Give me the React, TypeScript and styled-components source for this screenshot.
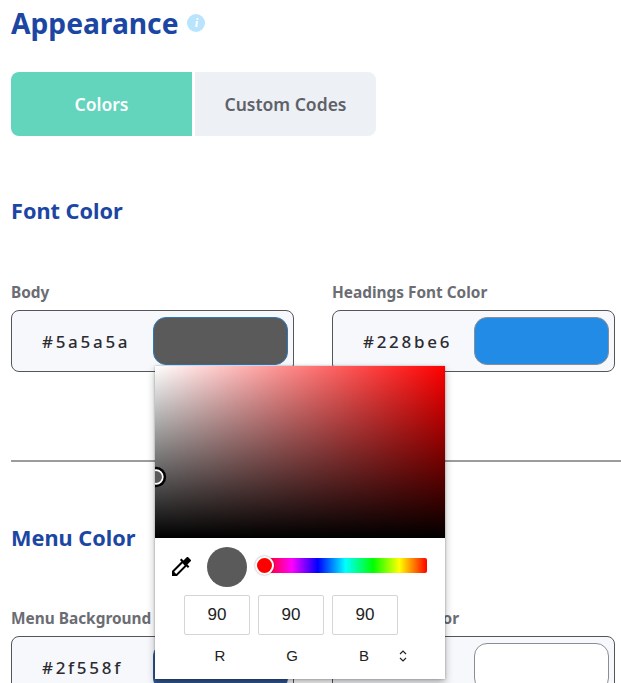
import styled, { createGlobalStyle } from 'styled-components'

const GlobalStyle = createGlobalStyle`
  html, body {
    margin: 0;
    padding: 0;
    height: 683px;
    overflow: hidden;
    background: #fff;
    font-family: "Noto Sans", "Open Sans", sans-serif;
  }
  * {
    box-sizing: border-box;
  }
`

const Page = styled.div`
  position: relative;
  width: 621px;
  height: 683px;
  overflow: hidden;
  padding-left: 11px;
`

const TitleRow = styled.div`
  display: flex;
  align-items: center;
  gap: 9px;
  height: 48px;
`

const Title = styled.h1`
  margin: -2px 0 0;
  font-size: 28.2px;
  font-weight: 700;
  color: #1c46a3;
  line-height: 46px;
`

const InfoIcon = styled.span`
  width: 18px;
  height: 18px;
  margin-top: -3px;
  border-radius: 50%;
  background: #b9e4fd;
  color: #fff;
  display: flex;
  align-items: center;
  justify-content: center;
  font-size: 13px;
  font-style: italic;
  font-weight: 700;
  font-family: "Liberation Serif", serif;
`

const Tabs = styled.div`
  display: flex;
  gap: 3px;
  margin-top: 24px;
`

const Tab = styled.div<{ $active?: boolean; $side: 'left' | 'right' }>`
  width: 181px;
  height: 64px;
  display: flex;
  align-items: center;
  justify-content: center;
  font-size: 17.5px;
  font-weight: 600;
  background: ${(p) => (p.$active ? '#63d5bc' : '#edf0f5')};
  color: ${(p) => (p.$active ? '#fff' : '#5f6168')};
  border-radius: ${(p) => (p.$side === 'left' ? '8px 0 0 8px' : '0 8px 8px 0')};
`

const SectionTitle = styled.h2<{ $top: number }>`
  margin: ${(p) => p.$top}px 0 0;
  font-size: 21.7px;
  font-weight: 700;
  line-height: 30px;
  color: #1c46a3;
`

const FieldGrid = styled.div<{ $top: number }>`
  display: grid;
  grid-template-columns: 283px 283px;
  column-gap: 38px;
  margin-top: ${(p) => p.$top}px;
`

const Field = styled.div`
  display: flex;
  flex-direction: column;
`

const FieldLabel = styled.label`
  font-size: 15.4px;
  font-weight: 700;
  line-height: 20px;
  color: #6b6d73;
  margin-bottom: 7px;
  white-space: nowrap;
`

const ColorBox = styled.div`
  width: 283px;
  height: 62px;
  flex-shrink: 0;
  display: flex;
  align-items: center;
  padding: 0 4px 0 30px;
  background: #f7f8fc;
  border: 1px solid #55565a;
  border-radius: 8px;
`

const HexValue = styled.div`
  width: 86px;
  margin-right: 25px;
  overflow: hidden;
  white-space: nowrap;
  font-size: 17px;
  font-weight: 500;
  letter-spacing: 2.7px;
  color: #2b2c30;
`

const Swatch = styled.div<{ $color: string; $border: string }>`
  width: 135px;
  height: 48px;
  border-radius: 13px;
  background: ${(p) => p.$color};
  border: 1px solid ${(p) => p.$border};
`

const Divider = styled.hr`
  margin: 88px 0 0;
  border: 0;
  border-top: 2px solid #9c9c9c;
`

const Picker = styled.div`
  position: absolute;
  left: 155px;
  top: 366px;
  width: 290px;
  height: 313px;
  background: #fff;
  box-shadow: 0 0 2px rgba(0, 0, 0, 0.3), 0 4px 8px rgba(0, 0, 0, 0.3);
`

const Saturation = styled.div`
  position: relative;
  height: 172px;
  overflow: hidden;
  background:
    linear-gradient(to top, #000, rgba(0, 0, 0, 0)),
    linear-gradient(to right, #fff, rgba(255, 255, 255, 0)),
    #f00;
`

const SaturationHandle = styled.div`
  position: absolute;
  left: -8px;
  top: 102px;
  width: 18px;
  height: 18px;
  border-radius: 50%;
  background: #5a5a5a;
  border: 2px solid #fff;
  box-shadow: 0 0 0 3px #000;
  transform: scale(0.85);
`

const Controls = styled.div`
  display: flex;
  align-items: center;
  height: 57px;
  padding-left: 17px;
`

const DropperIcon = styled.svg`
  width: 19px;
  height: 19px;
  margin-right: 16px;
  flex-shrink: 0;
`

const Preview = styled.div`
  width: 40px;
  height: 40px;
  border-radius: 50%;
  background: #5a5a5a;
  margin-right: 17px;
  flex-shrink: 0;
`

const HueTrack = styled.div`
  position: relative;
  width: 163px;
  height: 15px;
  margin-top: -2px;
  border-radius: 2px;
  background: linear-gradient(
    to right,
    #f00 0%,
    #f0f 17%,
    #00f 33%,
    #0ff 50%,
    #0f0 67%,
    #ff0 83%,
    #f00 100%
  );
`

const HueHandle = styled.div`
  position: absolute;
  left: -9px;
  top: -2px;
  width: 19px;
  height: 19px;
  border-radius: 50%;
  background: #f00;
  border: 2px solid #fff;
  box-shadow: 0 0 2px rgba(0, 0, 0, 0.4);
`

const InputsRow = styled.div`
  display: flex;
  gap: 8px;
  padding-left: 29px;
`

const ChannelInput = styled.div`
  width: 66px;
  height: 40px;
  display: flex;
  align-items: center;
  justify-content: center;
  border: 1px solid #d5d5d5;
  border-radius: 2px;
  font-family: "Liberation Sans", Arial, sans-serif;
  font-size: 17px;
  color: #222;
`

const LabelsRow = styled.div`
  display: flex;
  align-items: center;
  margin-top: 11px;
  padding-left: 29px;
`

const ChannelLabel = styled.div`
  width: 72px;
  text-align: center;
  font-family: "Liberation Sans", Arial, sans-serif;
  font-size: 15px;
  line-height: 20px;
  color: #222;
`

const ToggleIcon = styled.svg`
  width: 10px;
  height: 14px;
  margin-left: -2px;
`

const fontFields = [
  { label: 'Body', hex: '#5a5a5a', color: '#5a5a5a', border: '#2f78b8' },
  { label: 'Headings Font Color', hex: '#228be6', color: '#228be6', border: '#8a8d94' },
]

const menuFields = [
  { label: 'Menu Background', hex: '#2f558f', color: '#2f558f', border: '#2f558f' },
  { label: 'Menu Font Color', hex: '#ffffff', color: '#ffffff', border: '#8a8d94' },
]

function ColorField({ label, hex, color, border }: (typeof fontFields)[number]) {
  return (
    <Field>
      <FieldLabel>{label}</FieldLabel>
      <ColorBox>
        <HexValue>{hex}</HexValue>
        <Swatch $color={color} $border={border} />
      </ColorBox>
    </Field>
  )
}

export default function App() {
  return (
    <Page>
      <GlobalStyle />
      <TitleRow>
        <Title>Appearance</Title>
        <InfoIcon>i</InfoIcon>
      </TitleRow>

      <Tabs>
        <Tab $active $side="left">Colors</Tab>
        <Tab $side="right">Custom Codes</Tab>
      </Tabs>

      <SectionTitle $top={60}>Font Color</SectionTitle>
      <FieldGrid $top={57}>
        {fontFields.map((f) => (
          <ColorField key={f.label} {...f} />
        ))}
      </FieldGrid>

      <Divider />

      <SectionTitle $top={61}>Menu Color</SectionTitle>
      <FieldGrid $top={56}>
        {menuFields.map((f) => (
          <ColorField key={f.label} {...f} />
        ))}
      </FieldGrid>

      <Picker>
        <Saturation>
          <SaturationHandle />
        </Saturation>
        <Controls>
          <DropperIcon viewBox="3 3 18 18" fill="#000">
            <path d="M20.71 5.63l-2.34-2.34a1 1 0 0 0-1.41 0l-3.12 3.12-1.93-1.91-1.41 1.41 1.42 1.42L3 16.25V21h4.75l8.92-8.92 1.42 1.42 1.41-1.41-1.92-1.92 3.12-3.12a1 1 0 0 0 .01-1.42zM6.92 19L5 17.08l8.06-8.06 1.92 1.92L6.92 19z" />
          </DropperIcon>
          <Preview />
          <HueTrack>
            <HueHandle />
          </HueTrack>
        </Controls>
        <InputsRow>
          <ChannelInput>90</ChannelInput>
          <ChannelInput>90</ChannelInput>
          <ChannelInput>90</ChannelInput>
        </InputsRow>
        <LabelsRow>
          <ChannelLabel>R</ChannelLabel>
          <ChannelLabel>G</ChannelLabel>
          <ChannelLabel>B</ChannelLabel>
          <ToggleIcon viewBox="0 0 10 14" fill="none" stroke="#222" strokeWidth="1.2">
            <path d="M2 5l3-3 3 3M2 9l3 3 3-3" />
          </ToggleIcon>
        </LabelsRow>
      </Picker>
    </Page>
  )
}
